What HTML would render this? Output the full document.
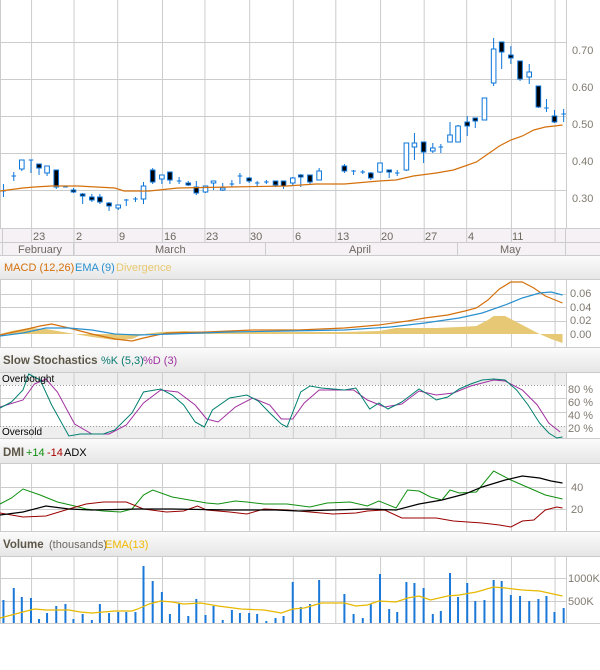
<!DOCTYPE html>
<html><head><meta charset="utf-8"><style>
html,body{margin:0;padding:0;background:#fff;width:600px;height:670px;overflow:hidden}
svg{display:block;font-family:"Liberation Sans",sans-serif}
.ax{font-size:11px;fill:#807a70}
.g line{stroke:#cccccc;stroke-width:1}
.s *{vector-effect:non-scaling-stroke}
.c line{stroke:#0a74da;stroke-width:1}
.c rect{stroke:#0a74da;stroke-width:1}
.h{font-size:11px}
.t{font-size:11.5px;font-weight:bold;fill:#5c5647}
</style></head><body>
<svg width="600" height="670" viewBox="0 0 600 670" xmlns="http://www.w3.org/2000/svg">
<defs>
<linearGradient id="hg" x1="0" y1="0" x2="0" y2="1"><stop offset="0" stop-color="#fbfbfb"/><stop offset="1" stop-color="#e6e6e6"/></linearGradient>
</defs>
<rect width="600" height="670" fill="#fff"/>

<g class="g">
<line x1="0" y1="42.5" x2="566" y2="42.5"/><line x1="0" y1="79.5" x2="566" y2="79.5"/><line x1="0" y1="116.5" x2="566" y2="116.5"/><line x1="0" y1="153.5" x2="566" y2="153.5"/><line x1="0" y1="190.5" x2="566" y2="190.5"/><line x1="0" y1="228.5" x2="600" y2="228.5"/>
<line x1="0.5" y1="0" x2="0.5" y2="623"/><line x1="566.5" y1="0" x2="566.5" y2="623"/>
</g>
<text class="ax" x="572" y="54">0.70</text><text class="ax" x="572" y="91">0.60</text><text class="ax" x="572" y="128">0.50</text><text class="ax" x="572" y="165">0.40</text><text class="ax" x="572" y="202">0.30</text>

<rect x="0" y="229" width="600" height="27" fill="#f6f1f5"/>
<g class="g">
<line x1="0" y1="242.5" x2="600" y2="242.5"/><line x1="0" y1="255.5" x2="600" y2="255.5"/>
<line x1="2.5" y1="229" x2="2.5" y2="255"/>
<line x1="73.5" y1="242" x2="73.5" y2="255"/><line x1="265.5" y1="242" x2="265.5" y2="255"/><line x1="457.5" y1="242" x2="457.5" y2="255"/><line x1="565.5" y1="229" x2="565.5" y2="255"/>
</g>
<g class="ax" style="fill:#6c6860">
<text x="33" y="240">23</text><text x="76" y="240">2</text><text x="119" y="240">9</text><text x="164" y="240">16</text><text x="206" y="240">23</text><text x="250" y="240">30</text><text x="295" y="240">6</text><text x="337" y="240">13</text><text x="381" y="240">20</text><text x="425" y="240">27</text><text x="468" y="240">4</text><text x="512" y="240">11</text>
<text x="18" y="253">February</text><text x="155" y="253">March</text><text x="349" y="253">April</text><text x="500" y="253">May</text>
</g>

<rect x="0" y="256" width="600" height="24" fill="url(#hg)"/>
<line x1="0" y1="279.5" x2="600" y2="279.5" stroke="#ccc"/>
<text class="h" x="4" y="271" fill="#d4700c">MACD (12,26)</text><text class="h" x="75" y="271" fill="#2a90d0">EMA (9)</text><text class="h" x="116" y="271" fill="#e8c870">Divergence</text>
<g class="g"><line x1="0" y1="294.5" x2="566" y2="294.5"/><line x1="0" y1="307.5" x2="566" y2="307.5"/><line x1="0" y1="321.5" x2="566" y2="321.5"/><line x1="0" y1="347.5" x2="600" y2="347.5"/></g>
<text class="ax" x="570" y="297">0.06</text><text class="ax" x="570" y="311">0.04</text><text class="ax" x="570" y="324">0.02</text><text class="ax" x="570" y="338">0.00</text>

<rect x="0" y="348" width="600" height="24" fill="url(#hg)"/>
<line x1="0" y1="372.5" x2="600" y2="372.5" stroke="#ccc"/>
<text class="t" x="3" y="364">Slow Stochastics</text><text class="h" x="101" y="364" fill="#0a7a70">%K (5,3)</text><text class="h" x="143" y="364" fill="#a030a0">%D (3)</text>
<rect x="0" y="373" width="566" height="12" fill="#eeeeee"/><rect x="0" y="426" width="566" height="12" fill="#eeeeee"/>
<g class="g"><line x1="0" y1="398.5" x2="566" y2="398.5"/><line x1="0" y1="412.5" x2="566" y2="412.5"/><line x1="0" y1="438.5" x2="600" y2="438.5"/></g>
<line x1="0" y1="385.5" x2="566" y2="385.5" stroke="#999" stroke-dasharray="1,2"/><line x1="0" y1="426.5" x2="566" y2="426.5" stroke="#999" stroke-dasharray="1,2"/>
<text class="ax" x="568" y="393">80 %</text><text class="ax" x="568" y="406">60 %</text><text class="ax" x="568" y="419">40 %</text><text class="ax" x="568" y="432">20 %</text>

<rect x="0" y="439" width="600" height="24" fill="url(#hg)"/>
<line x1="0" y1="463.5" x2="600" y2="463.5" stroke="#ccc"/>
<text class="t" x="3" y="456">DMI</text><text class="h" x="26" y="456" fill="#109010">+14</text><text class="h" x="47" y="456" fill="#aa0000">-14</text><text class="h" x="64" y="456" fill="#000">ADX</text>
<g class="g"><line x1="0" y1="487.5" x2="566" y2="487.5"/><line x1="0" y1="509.5" x2="566" y2="509.5"/><line x1="0" y1="531.5" x2="600" y2="531.5"/></g>
<text class="ax" x="571" y="491">40</text><text class="ax" x="571" y="513">20</text>

<rect x="0" y="532" width="600" height="24" fill="url(#hg)"/>
<line x1="0" y1="556.5" x2="600" y2="556.5" stroke="#ccc"/>
<text class="t" x="3" y="548">Volume</text><text class="h" x="49" y="548" fill="#6c6860">(thousands)</text><text class="h" x="105" y="548" fill="#f0b800">EMA(13)</text>
<g class="g"><line x1="0" y1="578.5" x2="566" y2="578.5"/><line x1="0" y1="601.5" x2="566" y2="601.5"/><line x1="0" y1="623.5" x2="600" y2="623.5"/></g>
<text class="ax" x="568" y="582">1000K</text><text class="ax" x="568" y="605">500K</text>

<g class="s" transform="scale(1.148,1)">
<path stroke="#cccccc" fill="none" d="M27.5 0V243M27.5 280V348M27.5 373V439M27.5 464V532M27.5 557V623
M64.5 0V256M64.5 280V348M64.5 373V439M64.5 464V532M64.5 557V623
M102.5 0V243M102.5 280V348M102.5 373V439M102.5 464V532M102.5 557V623
M141.5 0V243M141.5 280V348M141.5 373V439M141.5 464V532M141.5 557V623
M178.5 0V243M178.5 280V348M178.5 373V439M178.5 464V532M178.5 557V623
M217.5 0V243M217.5 280V348M217.5 373V439M217.5 464V532M217.5 557V623
M255.5 0V243M255.5 280V348M255.5 373V439M255.5 464V532M255.5 557V623
M292.5 0V243M292.5 280V348M292.5 373V439M292.5 464V532M292.5 557V623
M331.5 0V243M331.5 280V348M331.5 373V439M331.5 464V532M331.5 557V623
M369.5 0V243M369.5 280V348M369.5 373V439M369.5 464V532M369.5 557V623
M406.5 0V243M406.5 280V348M406.5 373V439M406.5 464V532M406.5 557V623
M445.5 0V243M445.5 280V348M445.5 373V439M445.5 464V532M445.5 557V623
M483.5 0V243M483.5 280V348M483.5 373V439M483.5 464V532M483.5 557V623"/>

<g class="c">
<line x1="3" y1="184" x2="3" y2="197"/><line x1="1" y1="191" x2="5" y2="191"/>
<line x1="12" y1="172" x2="12" y2="181"/><line x1="10" y1="176" x2="14" y2="176"/>
<line x1="19" y1="160" x2="19" y2="171"/><rect x="17" y="160" width="4" height="9" fill="#fff"/>
<line x1="27" y1="160" x2="27" y2="173"/><line x1="25" y1="160" x2="29" y2="160"/>
<line x1="34" y1="164" x2="34" y2="175"/><rect x="32" y="164" width="4" height="4" fill="#000"/>
<line x1="41" y1="166" x2="41" y2="176"/><rect x="39" y="166" width="4" height="7" fill="#fff"/>
<line x1="49" y1="170" x2="49" y2="189"/><rect x="47" y="170" width="4" height="17" fill="#000"/>
<line x1="55" y1="187" x2="59" y2="187"/>
<line x1="64" y1="188" x2="64" y2="193"/><rect x="62" y="190" width="4" height="2" fill="#000"/>
<line x1="72" y1="193" x2="72" y2="204"/><rect x="70" y="194" width="4" height="2" fill="#000"/>
<line x1="80" y1="194" x2="80" y2="202"/><rect x="78" y="197" width="4" height="3" fill="#000"/>
<line x1="87" y1="194" x2="87" y2="204"/><rect x="85" y="197" width="4" height="5" fill="#000"/>
<line x1="95" y1="202" x2="95" y2="211"/><rect x="93" y="203" width="4" height="3" fill="#000"/>
<line x1="103" y1="205" x2="103" y2="210"/><rect x="101" y="205" width="4" height="3" fill="#fff"/>
<line x1="110" y1="199" x2="110" y2="206"/><line x1="108" y1="200" x2="112" y2="200"/>
<line x1="118" y1="197" x2="118" y2="202"/><line x1="116" y1="199" x2="120" y2="199"/>
<line x1="125" y1="182" x2="125" y2="204"/><rect x="123" y="186" width="4" height="13" fill="#fff"/>
<line x1="133" y1="168" x2="133" y2="184"/><rect x="131" y="170" width="4" height="12" fill="#000"/>
<line x1="141" y1="175" x2="141" y2="184"/><rect x="139" y="175" width="4" height="4" fill="#fff"/>
<line x1="148" y1="172" x2="148" y2="184"/><rect x="146" y="172" width="4" height="8" fill="#000"/>
<line x1="156" y1="177" x2="156" y2="184"/><line x1="154" y1="181" x2="158" y2="181"/>
<line x1="164" y1="181" x2="164" y2="186"/><rect x="162" y="183" width="4" height="2" fill="#000"/>
<line x1="171" y1="181" x2="171" y2="195"/><rect x="169" y="187" width="4" height="6" fill="#000"/>
<line x1="179" y1="186" x2="179" y2="193"/><rect x="177" y="186" width="4" height="6" fill="#fff"/>
<line x1="186" y1="181" x2="186" y2="190"/><rect x="184" y="181" width="4" height="2" fill="#fff"/>
<line x1="194" y1="183" x2="194" y2="191"/><rect x="192" y="188" width="4" height="2" fill="#fff"/>
<line x1="202" y1="180" x2="202" y2="187"/><line x1="200" y1="184" x2="204" y2="184"/>
<line x1="209" y1="173" x2="209" y2="184"/><line x1="207" y1="176" x2="211" y2="176"/>
<line x1="217" y1="177" x2="217" y2="183"/><rect x="215" y="178" width="4" height="3" fill="#000"/>
<line x1="224" y1="181" x2="224" y2="187"/><line x1="222" y1="183" x2="226" y2="183"/>
<line x1="232" y1="180" x2="232" y2="184"/><line x1="230" y1="182" x2="234" y2="182"/>
<line x1="240" y1="181" x2="240" y2="187"/><rect x="238" y="181" width="4" height="4" fill="#000"/>
<line x1="247" y1="181" x2="247" y2="189"/><rect x="245" y="181" width="4" height="5" fill="#000"/>
<line x1="255" y1="177" x2="255" y2="186"/><rect x="253" y="178" width="4" height="5" fill="#fff"/>
<line x1="262" y1="174" x2="262" y2="187"/><rect x="260" y="175" width="4" height="2" fill="#000"/>
<line x1="270" y1="175" x2="270" y2="184"/><rect x="268" y="175" width="4" height="7" fill="#000"/>
<line x1="278" y1="168" x2="278" y2="180"/><rect x="276" y="171" width="4" height="9" fill="#fff"/>
<line x1="300" y1="164" x2="300" y2="173"/><rect x="298" y="166" width="4" height="5" fill="#000"/>
<line x1="308" y1="170" x2="308" y2="175"/><line x1="306" y1="171" x2="310" y2="171"/>
<line x1="316" y1="170" x2="316" y2="174"/><line x1="314" y1="172" x2="318" y2="172"/>
<line x1="323" y1="172" x2="323" y2="180"/><rect x="321" y="173" width="4" height="5" fill="#000"/>
<line x1="331" y1="163" x2="331" y2="173"/><rect x="329" y="163" width="4" height="9" fill="#fff"/>
<line x1="339" y1="170" x2="339" y2="178"/><rect x="337" y="170" width="4" height="2" fill="#000"/>
<line x1="346" y1="170" x2="346" y2="176"/><line x1="344" y1="173" x2="348" y2="173"/>
<line x1="354" y1="143" x2="354" y2="171"/><rect x="352" y="143" width="4" height="27" fill="#fff"/>
<line x1="361" y1="133" x2="361" y2="160"/><rect x="359" y="143" width="4" height="4" fill="#fff"/>
<line x1="369" y1="142" x2="369" y2="163"/><rect x="367" y="142" width="4" height="10" fill="#000"/>
<line x1="377" y1="143" x2="377" y2="153"/><rect x="375" y="148" width="4" height="3" fill="#fff"/>
<line x1="384" y1="144" x2="384" y2="153"/><line x1="382" y1="147" x2="386" y2="147"/>
<line x1="392" y1="122" x2="392" y2="142"/><rect x="390" y="135" width="4" height="7" fill="#fff"/>
<line x1="399" y1="125" x2="399" y2="142"/><rect x="397" y="126" width="4" height="16" fill="#fff"/>
<line x1="407" y1="116" x2="407" y2="136"/><rect x="405" y="122" width="4" height="4" fill="#000"/>
<line x1="414" y1="118" x2="414" y2="128"/><rect x="412" y="118" width="4" height="3" fill="#000"/>
<line x1="422" y1="98" x2="422" y2="120"/><rect x="420" y="98" width="4" height="22" fill="#fff"/>
<line x1="430" y1="38" x2="430" y2="86"/><rect x="428" y="49" width="4" height="34" fill="#fff"/>
<line x1="437" y1="42" x2="437" y2="69"/><rect x="435" y="42" width="4" height="10" fill="#000"/>
<line x1="445" y1="46" x2="445" y2="64"/><rect x="443" y="55" width="4" height="3" fill="#000"/>
<line x1="453" y1="61" x2="453" y2="81"/><rect x="451" y="61" width="4" height="18" fill="#000"/>
<line x1="461" y1="64" x2="461" y2="84"/><rect x="459" y="72" width="4" height="5" fill="#fff"/>
<line x1="469" y1="86" x2="469" y2="108"/><rect x="467" y="86" width="4" height="21" fill="#000"/>
<line x1="476" y1="99" x2="476" y2="112"/><line x1="474" y1="108" x2="478" y2="108"/>
<line x1="483" y1="110" x2="483" y2="123"/><rect x="481" y="116" width="4" height="6" fill="#000"/>
<line x1="491" y1="109" x2="491" y2="122"/><line x1="489" y1="114" x2="493" y2="114"/>
</g>
<polyline fill="none" stroke="#d4700c" stroke-width="1.2" points="0,191 20,188 30,187 45,186 68,186 100,188 108,191 130,191 155,188 200,187 250,186 275,184 300,184 330,181 345,180 360,176 380,173 395,170 405,166 415,162 425,154 435,146 445,140 455,136 465,130 475,127 483,126 490,125"/>

<polygon fill="#e6c875" points="0,334 10,331 25,328 40,329 55,332 65,334 80,337 100,340 115,339 125,334 140,332 160,331 180,332 200,332 230,332 260,332 300,332 330,331 345,328 360,328 380,328 400,327 415,326 425,320 430,316 440,316 450,322 460,328 470,334 480,339 490,343 490,334"/>
<polyline fill="none" stroke="#d4700c" stroke-width="1.2" points="0,335 20,330 35,326 45,324 60,328 80,334 100,339 115,341 125,338 145,333 180,332 220,330 260,330 300,328 330,325 355,321 370,318 390,315 405,311 415,308 425,300 435,289 445,282 455,282 465,288 475,296 490,303"/>
<polyline fill="none" stroke="#2a90d0" stroke-width="1.2" points="0,336 20,333 40,328 60,328 80,330 100,334 120,335 150,334 200,332 250,331 300,330 340,327 370,323 400,318 420,313 440,305 455,298 470,293 480,292 490,295"/>

<polyline fill="none" stroke="#a030a0" stroke-width="1" points="0,407 20,400 30,384 40,379 50,392 65,424 80,434 95,434 110,425 125,403 140,390 155,392 170,405 180,419 190,422 205,407 220,398 235,405 245,419 255,419 265,403 278,390 300,390 308,390 320,400 335,407 350,404 365,391 380,395 395,393 410,386 430,380 440,381 455,390 468,405 478,423 488,432"/>
<polyline fill="none" stroke="#008070" stroke-width="1" points="0,408 10,402 20,390 25,374 35,380 45,405 60,436 70,434 90,434 100,430 115,413 125,392 140,389 150,395 160,405 170,422 178,427 185,410 200,398 215,395 225,401 235,413 245,424 250,427 262,392 270,386 280,388 300,390 310,388 322,409 330,403 338,409 350,402 365,389 375,396 380,400 390,397 400,389 410,384 420,380 430,379 440,380 450,390 460,405 470,423 478,433 485,438 490,437"/>

<polyline fill="none" stroke="#109010" stroke-width="1" points="0,504 10,498 20,489 35,495 50,502 65,506 75,509 90,511 105,512 115,509 125,495 133,490 150,497 180,503 190,504 205,501 215,502 230,504 250,504 270,507 285,503 305,502 320,506 330,501 345,508 355,490 365,491 375,497 385,500 392,490 400,493 415,492 430,471 445,480 465,490 475,495 490,499"/>
<polyline fill="none" stroke="#990000" stroke-width="1" points="0,513 20,517 40,516 60,509 75,504 90,502 110,502 125,509 145,512 160,511 172,506 180,510 200,512 215,514 230,509 250,510 270,512 290,514 310,513 320,511 335,510 350,518 380,518 395,521 420,523 435,525 445,527 455,521 465,520 475,510 485,507 490,508"/>
<polyline fill="none" stroke="#000" stroke-width="1.2" points="0,515 20,512 40,506 60,509 80,510 120,509 150,509 200,510 240,510 260,511 320,509 345,510 365,504 385,500 405,494 420,487 440,480 455,476 470,478 480,481 490,483"/>

<path stroke="#1a78d8" stroke-width="2" d="M3 623V600M12 623V588M19 623V597M27 623V598M34 623V619M41 623V613M49 623V606M57 623V604M64 623V619M72 623V614M80 623V620M87 623V604M95 623V613M103 623V612M110 623V612M118 623V612M125 623V566M133 623V581M141 623V592M148 623V614M156 623V603M164 623V616M171 623V599M179 623V615M186 623V606M194 623V620M202 623V610M209 623V613M217 623V613M224 623V614M232 623V621M240 623V618M247 623V616M255 623V582M262 623V607M270 623V604M278 623V580M300 623V594M308 623V614M316 623V618M323 623V604M331 623V574M339 623V609M346 623V612M354 623V582M361 623V583M369 623V588M377 623V614M384 623V611M392 623V573M399 623V597M407 623V583M414 623V601M422 623V600M430 623V580M437 623V581M445 623V595M453 623V596M461 623V601M469 623V599M476 623V596M483 623V612M491 623V608"/>
<polyline fill="none" stroke="#e6b800" stroke-width="1.2" points="0,618 20,612 30,609 40,610 60,610 70,612 80,613 100,611 115,611 120,609 130,604 140,601 150,602 160,604 175,603 190,606 210,609 230,610 245,613 255,609 265,608 280,603 300,603 310,606 320,605 330,601 345,602 355,598 365,596 375,600 390,596 400,595 415,592 430,587 440,588 455,590 470,591 490,596"/>
</g>
<text x="2" y="382" font-size="10" fill="#000">Overbought</text><text x="2" y="435" font-size="10" fill="#000">Oversold</text>
</svg>
</body></html>
